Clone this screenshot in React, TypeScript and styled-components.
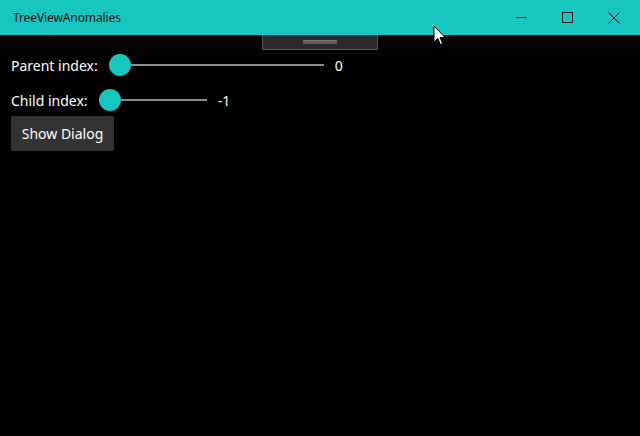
import React from "react";
import styled, { createGlobalStyle } from "styled-components";

const GlobalStyle = createGlobalStyle`
  html, body {
    margin: 0;
    padding: 0;
    background: #000000;
  }
  * {
    box-sizing: border-box;
  }
`;

const Window = styled.div`
  position: relative;
  width: 640px;
  height: 436px;
  display: flex;
  flex-direction: column;
  background: #000000;
  font-family: "Noto Sans", "Open Sans", sans-serif;
  overflow: hidden;
`;

const TitleBar = styled.header`
  height: 35px;
  display: flex;
  align-items: center;
  justify-content: space-between;
  background: #17c6c0;
  flex-shrink: 0;
`;

const Title = styled.span`
  padding-left: 13px;
  font-size: 12px;
  color: #111111;
  letter-spacing: -0.1px;
`;

const Controls = styled.div`
  display: flex;
  height: 100%;
  margin-right: 2px;
`;

const ControlButton = styled.div<{ $w?: number }>`
  width: ${(p) => p.$w ?? 46}px;
  height: 100%;
  display: flex;
  align-items: center;
  justify-content: center;
  color: #1a1a1a;
`;

const Content = styled.main`
  display: flex;
  flex-direction: column;
  padding: 19px 11px;
`;

const Row = styled.div<{ $mt?: number }>`
  display: flex;
  align-items: center;
  height: 22px;
  margin-top: ${(p) => p.$mt ?? 0}px;
`;

const Label = styled.span`
  color: #ffffff;
  font-size: 14px;
  margin-right: 11px;
`;

const Slider = styled.div<{ $width: number }>`
  display: flex;
  align-items: center;
  width: ${(p) => p.$width}px;
`;

const Thumb = styled.div`
  width: 22px;
  height: 22px;
  border-radius: 50%;
  background: #17c6c0;
  flex-shrink: 0;
`;

const Rail = styled.div`
  flex: 1;
  height: 2px;
  background: #8a8a8a;
`;

const Value = styled.span`
  color: #ffffff;
  font-size: 14px;
  margin-left: 11px;
`;

const DialogButton = styled.button`
  margin-top: 5px;
  align-self: flex-start;
  width: 103px;
  height: 35px;
  border: none;
  border-radius: 2px;
  background: #333333;
  color: #ffffff;
  font-family: inherit;
  font-size: 14px;
  padding: 0;
`;

const DebugBar = styled.div`
  position: absolute;
  left: 262px;
  top: 35px;
  width: 116px;
  height: 15px;
  background: #2b2b2b;
  border: 1px solid #555555;
  border-top: none;
  display: flex;
  align-items: center;
  justify-content: center;
`;

const Grip = styled.div`
  width: 34px;
  height: 4px;
  background: #5e5e5e;
  border-top: 1px solid #787878;
`;

const Cursor = styled.svg`
  position: absolute;
  left: 433px;
  top: 25px;
`;

export default function App() {
  return (
    <>
      <GlobalStyle />
      <Window>
        <TitleBar>
          <Title>TreeViewAnomalies</Title>
          <Controls>
            <ControlButton>
              <svg width="11" height="11" viewBox="0 0 11 11">
                <path d="M0 5.5 H11" stroke="currentColor" strokeWidth="1" />
              </svg>
            </ControlButton>
            <ControlButton>
              <svg width="11" height="11" viewBox="0 0 11 11">
                <rect x="0.5" y="0.5" width="10" height="10" fill="none" stroke="currentColor" strokeWidth="1" />
              </svg>
            </ControlButton>
            <ControlButton $w={48}>
              <svg width="12" height="12" viewBox="0 0 12 12">
                <path d="M0.5 0.5 L11.5 11.5 M11.5 0.5 L0.5 11.5" stroke="currentColor" strokeWidth="1" />
              </svg>
            </ControlButton>
          </Controls>
        </TitleBar>
        <Content>
          <Row>
            <Label>Parent index:</Label>
            <Slider $width={215}>
              <Thumb />
              <Rail />
            </Slider>
            <Value>0</Value>
          </Row>
          <Row $mt={13}>
            <Label>Child index:</Label>
            <Slider $width={108}>
              <Thumb />
              <Rail />
            </Slider>
            <Value>-1</Value>
          </Row>
          <DialogButton>Show Dialog</DialogButton>
        </Content>
        <DebugBar>
          <Grip />
        </DebugBar>
        <Cursor width="14" height="22" viewBox="0 0 14 22">
          <path
            d="M1 1 L1 17 L4.8 13.4 L7.4 19.5 L9.6 18.6 L7 12.6 L12.2 12.6 Z"
            fill="#ffffff"
            stroke="#000000"
            strokeWidth="1"
            strokeLinejoin="miter"
          />
        </Cursor>
      </Window>
    </>
  );
}
